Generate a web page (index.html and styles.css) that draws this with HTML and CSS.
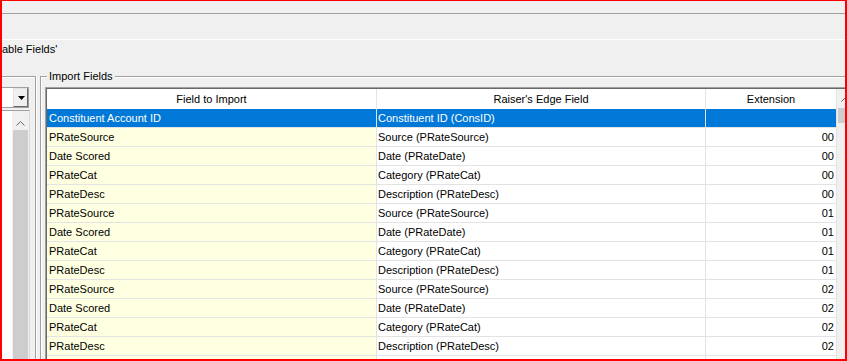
FILE: index.html
```html
<!DOCTYPE html>
<html>
<head>
<meta charset="utf-8">
<link rel="stylesheet" href="styles.css">
</head>
<body>
<div class="frame">
  <div class="topbar"></div>
  <div class="toolbar"></div>
  <div class="caption">able Fields'</div>
  <div class="main">
    <div class="group group-left">
      <div class="combo">
        <span class="combo-btn"><svg width="7" height="4" viewBox="0 0 7 4"><polygon points="0,0 7,0 3.5,4" fill="#000"/></svg></span>
      </div>
      <div class="listbox">
        <div class="lscroll">
          <div class="sbtn sbtn-left"><svg width="9" height="5" viewBox="0 0 9 5"><polyline points="0.5,4.5 4.5,0.5 8.5,4.5" fill="none" stroke="#606060" stroke-width="1"/></svg></div>
          <div class="thumb thumb-fill"></div>
        </div>
      </div>
    </div>
    <div class="group group-right">
      <span class="legend">Import Fields</span>
      <div class="tbl-outer">
        <div class="tbl">
          <div class="grid">
            <div class="row head"><div class="c c1">Field to Import</div><div class="c c2">Raiser's Edge Field</div><div class="c c3">Extension</div></div>
            <div class="row sel"><div class="c c1">Constituent Account ID</div><div class="c c2">Constituent ID (ConsID)</div><div class="c c3"></div></div>
            <div class="row"><div class="c c1">PRateSource</div><div class="c c2">Source (PRateSource)</div><div class="c c3">00</div></div>
            <div class="row"><div class="c c1">Date Scored</div><div class="c c2">Date (PRateDate)</div><div class="c c3">00</div></div>
            <div class="row"><div class="c c1">PRateCat</div><div class="c c2">Category (PRateCat)</div><div class="c c3">00</div></div>
            <div class="row"><div class="c c1">PRateDesc</div><div class="c c2">Description (PRateDesc)</div><div class="c c3">00</div></div>
            <div class="row"><div class="c c1">PRateSource</div><div class="c c2">Source (PRateSource)</div><div class="c c3">01</div></div>
            <div class="row"><div class="c c1">Date Scored</div><div class="c c2">Date (PRateDate)</div><div class="c c3">01</div></div>
            <div class="row"><div class="c c1">PRateCat</div><div class="c c2">Category (PRateCat)</div><div class="c c3">01</div></div>
            <div class="row"><div class="c c1">PRateDesc</div><div class="c c2">Description (PRateDesc)</div><div class="c c3">01</div></div>
            <div class="row"><div class="c c1">PRateSource</div><div class="c c2">Source (PRateSource)</div><div class="c c3">02</div></div>
            <div class="row"><div class="c c1">Date Scored</div><div class="c c2">Date (PRateDate)</div><div class="c c3">02</div></div>
            <div class="row"><div class="c c1">PRateCat</div><div class="c c2">Category (PRateCat)</div><div class="c c3">02</div></div>
            <div class="row"><div class="c c1">PRateDesc</div><div class="c c2">Description (PRateDesc)</div><div class="c c3">02</div></div>
            <div class="row"><div class="c c1"></div><div class="c c2"></div><div class="c c3"></div></div>
          </div>
          <div class="vscroll">
            <div class="sbtn sbtn-table"><svg width="9" height="5" viewBox="0 0 9 5"><polyline points="0.5,4.5 4.5,0.5 8.5,4.5" fill="none" stroke="#606060" stroke-width="1"/></svg></div>
            <div class="thumb thumb-small"></div>
          </div>
        </div>
      </div>
    </div>
  </div>
</div>
</body>
</html>
```
FILE: styles.css
```css
* { box-sizing: border-box; }
html, body { margin: 0; padding: 0; }
body {
  background: #f0f0f0;
  font-family: "Liberation Sans", Arial, sans-serif;
  font-size: 11px;
  color: #000;
}
.frame {
  width: 847px;
  height: 361px;
  border: 2px solid #ff0000;
  border-top-width: 1px;
  background: #f0f0f0;
  display: flex;
  flex-direction: column;
  overflow: hidden;
}
.topbar { flex: none; height: 13px; border-bottom: 1px solid #a0a0a0; }
.toolbar { flex: none; height: 26px; border-bottom: 1px solid #ffffff; }
.caption { flex: none; height: 36px; padding-top: 3px; line-height: 13px; white-space: nowrap; }
.main { flex: 1; display: flex; min-height: 0; }

.group { flex: none; position: relative; border-top: 1px solid #a0a0a0; }
.group-left {
  width: 34px;
  border-right: 1px solid #a0a0a0;
  box-shadow: 1px 0 0 #ffffff, inset 0 1px 0 #ffffff;
  padding-top: 10px;
  display: flex;
  flex-direction: column;
}
.combo {
  flex: none;
  width: 27px;
  height: 21px;
  border: 1px solid #a0a0a0;
  border-left: none;
  background: #ffffff;
  display: flex;
  justify-content: flex-end;
}
.combo-btn {
  width: 15px;
  height: 19px;
  border: 1px solid;
  border-color: #e3e3e3 #696969 #696969 #e3e3e3;
  background: #f0f0f0;
  display: flex;
  align-items: center;
  justify-content: center;
  padding-left: 1px;
}
.combo-btn svg { display: block; }
.listbox {
  flex: 1;
  margin-top: 2px;
  width: 28px;
  border-top: 1px solid #a0a0a0;
  border-right: 1px solid #dadada;
  background: #ffffff;
  display: flex;
  justify-content: flex-end;
}
.lscroll, .vscroll {
  flex: none;
  width: 17px;
  background: #f0f0f0;
  display: flex;
  flex-direction: column;
}
.sbtn { flex: none; height: 19px; display: flex; justify-content: center; }
.sbtn svg { display: block; }
.sbtn-left { align-items: flex-end; padding-bottom: 4px; }
.sbtn-table { align-items: center; padding-top: 1px; }
.thumb { margin: 0 1px; background: #cdcdcd; }
.thumb-fill { flex: 1; }
.thumb-small { flex: none; height: 15px; }

.group-right {
  width: 900px;
  margin-left: 4px;
  border-left: 1px solid #a0a0a0;
  box-shadow: inset 1px 1px 0 #ffffff;
  padding: 10px 0 0 4px;
  display: flex;
  flex-direction: column;
}
.legend {
  position: absolute;
  left: 6px;
  top: -7px;
  padding: 0 2px;
  background: #f0f0f0;
  line-height: 13px;
  white-space: nowrap;
}
.tbl-outer {
  flex: 1;
  min-height: 0;
  border-top: 1px solid #a0a0a0;
  border-left: 1px solid #a0a0a0;
}
.tbl {
  height: 100%;
  border-top: 1px solid #696969;
  border-left: 1px solid #696969;
  background: #ffffff;
  display: flex;
  overflow: hidden;
}
.grid { flex: none; display: flex; flex-direction: column; }
.row { display: flex; flex: none; }
.c {
  flex: none;
  height: 19px;
  padding: 1px 2px 0 2px;
  line-height: 17px;
  border-right: 1px solid #e3e3e3;
  border-bottom: 1px solid #e3e3e3;
  white-space: nowrap;
  overflow: hidden;
}
.c1 { width: 330px; background: #ffffe1; }
.c2 { width: 329px; padding-left: 1px; }
.c3 { width: 131px; text-align: right; }
.head .c {
  height: 20px;
  padding: 0;
  line-height: 20px;
  background: #ffffff;
  border-bottom: none;
  border-right-color: #e5e5e5;
  text-align: center;
}
.sel .c { background: #0078d7; color: #ffffff; }
```
